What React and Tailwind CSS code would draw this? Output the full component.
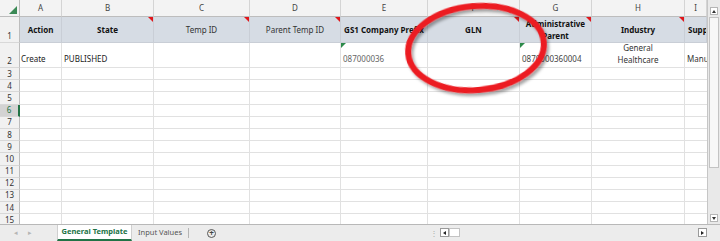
const cols = ["A", "B", "C", "D", "E", "F", "G", "H", "I"];
const widths = "20px 42px 92px 96px 91px 87px 92px 72px 93px 22px";

function RedTick({ side = "right", color = "red" }) {
  const cls =
    side === "right"
      ? "absolute top-0 right-0 w-0 h-0 border-l-[5px] border-l-transparent border-t-[5px]"
      : "absolute top-0 left-0 w-0 h-0 border-r-[5px] border-r-transparent border-t-[5px]";
  return <span className={cls + (color === "red" ? " border-t-[#e0161b]" : " border-t-[#2c8a4a]")} />;
}

function RowHead({ n, h, selected, bottom }) {
  return (
    <div
      className={
        "flex justify-center border-b border-b-[#d8d8d8] text-[8px] leading-[10px] " +
        (bottom ? "items-end pb-[1px] " : "items-center ") +
        (selected
          ? "bg-[#d3d3d3] text-[#217346] border-r-2 border-r-[#217346]"
          : "bg-[#f1f1f1] text-[#333] border-r border-r-[#bdbdbd]")
      }
      style={{ height: h }}
    >
      {n}
    </div>
  );
}

export default function App() {
  const headerRow = [
    { t: "Action", b: true },
    { t: "State", b: true, tick: true },
    { t: "Temp ID", tick: true },
    { t: "Parent Temp ID", tick: true },
    { t: "GS1 Company Prefix", b: true },
    { t: "GLN", b: true, tick: true },
    { t: "Administrative Parent", b: true, tick: true, two: true },
    { t: "Industry", b: true, tick: true },
    { t: "Supplier", b: true, clip: true },
  ];
  const emptyRows = [3, 4, 5, 6, 7, 8, 9, 10, 11, 12, 13, 14, 15];

  return (
    <div
      className="relative w-[720px] h-[241px] overflow-hidden bg-white text-[#222]"
      style={{ fontFamily: '"Noto Sans", "Open Sans", sans-serif' }}
    >
      <div className="flex h-[224px]">
        <div className="w-[707px] overflow-hidden">
          <div className="grid" style={{ gridTemplateColumns: widths }}>
            {/* column letters */}
            <div className="relative h-[17px] bg-[#f3f3f3] border-r border-b border-[#bdbdbd]">
              <span className="absolute right-[2px] bottom-[2px] w-0 h-0 border-l-[8px] border-l-transparent border-b-[8px] border-b-[#3c8a56]" />
            </div>
            {cols.map((c) => (
              <div
                key={c}
                className="h-[17px] flex items-center justify-center bg-[#f3f3f3] border-r border-r-[#d4d4d4] border-b border-b-[#bdbdbd] text-[8px] text-[#444]"
              >
                {c}
              </div>
            ))}

            {/* row 1 */}
            <RowHead n={1} h={26} bottom />
            {headerRow.map((c, i) => (
              <div
                key={i}
                className={
                  "relative h-[26px] flex items-center bg-[#d6dce4] border-r border-b border-[#c9ced6] text-[8px] leading-[12px] overflow-hidden " +
                  (c.clip ? "pl-[3px] justify-start whitespace-nowrap " : "justify-center text-center whitespace-nowrap ") +
                  (c.b ? "font-bold text-[#111]" : "text-[#333]")
                }
              >
                {c.two ? (
                  <span>
                    Administrative
                    <br />
                    Parent
                  </span>
                ) : (
                  c.t
                )}
                {c.tick && <RedTick />}
              </div>
            ))}

            {/* row 2 */}
            <RowHead n={2} h={25} bottom />
            <div className="h-[25px] flex items-end px-[1px] pb-[2px] border-r border-b border-[#e1e1e1] text-[8px]">Create</div>
            <div className="h-[25px] flex items-end px-[2px] pb-[2px] border-r border-b border-[#e1e1e1] text-[8px]">PUBLISHED</div>
            <div className="h-[25px] border-r border-b border-[#e1e1e1]" />
            <div className="h-[25px] border-r border-b border-[#e1e1e1]" />
            <div className="relative h-[25px] flex items-end px-[2px] pb-[2px] border-r border-b border-[#e1e1e1] text-[8px] text-[#666]">
              087000036
              <RedTick side="left" color="green" />
            </div>
            <div className="h-[25px] border-r border-b border-[#e1e1e1]" />
            <div className="relative h-[25px] flex items-end px-[2px] pb-[2px] border-r border-b border-[#e1e1e1] text-[8px] text-[#444] whitespace-nowrap">
              0870000360004
              <RedTick side="left" color="green" />
            </div>
            <div className="h-[25px] flex items-end justify-center pb-[1px] border-r border-b border-[#e1e1e1] text-[8px] leading-[12px] text-center text-[#333]">
              <span>
                General
                <br />
                Healthcare
              </span>
            </div>
            <div className="h-[25px] flex items-end px-[2px] pb-[2px] border-b border-[#e1e1e1] text-[8px] text-[#333] overflow-hidden whitespace-nowrap">
              Manufacturer
            </div>

            {/* empty rows */}
            {emptyRows.map((n) => (
              <Row key={n} n={n} />
            ))}
          </div>
        </div>

        {/* vertical scrollbar */}
        <div className="relative w-[13px] h-full bg-[#e9e9e9] border-l border-l-[#c6c6c6]">
          <div className="absolute left-[2px] top-[7px] w-[8px] h-[8px] bg-white border border-[#b5b5b5] flex items-center justify-center">
            <span className="w-0 h-0 border-l-[2px] border-r-[2px] border-l-transparent border-r-transparent border-b-[3px] border-b-[#333]" />
          </div>
          <div className="absolute left-[1px] top-[17px] w-[10px] h-[151px] bg-[#f7f7f7] border border-[#c3c3c3]" />
          <div className="absolute left-[2px] bottom-[2px] w-[8px] h-[8px] bg-white border border-[#b5b5b5] flex items-center justify-center">
            <span className="w-0 h-0 border-l-[2px] border-r-[2px] border-l-transparent border-r-transparent border-t-[3px] border-t-[#333]" />
          </div>
        </div>
      </div>

      {/* sheet tabs */}
      <div className="flex items-stretch h-[17px] bg-[#ececec] border-t border-t-[#b8b8b8] text-[7.5px] whitespace-nowrap">
        <div className="w-[57px] flex items-center gap-[10px] pl-[14px] text-[#b5b5b5] text-[7px]">
          <span>◂</span>
          <span>▸</span>
        </div>
        <div className="w-[75px] flex items-center justify-center bg-white border-x border-x-[#cfcfcf] border-b-2 border-b-[#217346] font-bold text-[#217346]">
          General Template
        </div>
        <div className="w-[57px] flex items-center justify-center text-[#555] border-r border-r-[#b5b5b5] my-[3px]">
          Input Values
        </div>
        <div className="w-[45px] flex items-center justify-center">
          <span className="w-[9px] h-[9px] rounded-full border border-[#555] flex items-center justify-center text-[8px] leading-none text-[#444] font-bold">
            +
          </span>
        </div>
        <div className="flex-1 flex items-center relative">
          <span className="absolute left-[196px] text-[#aaa] text-[8px]">⋮</span>
          <div className="absolute left-[206px] top-[3px] w-[9px] h-[9px] bg-white border border-[#9a9a9a] flex items-center justify-center">
            <span className="w-0 h-0 border-t-[2px] border-b-[2px] border-t-transparent border-b-transparent border-r-[3px] border-r-[#222]" />
          </div>
          <div className="absolute left-[215px] top-[3px] w-[11px] h-[9px] bg-white border border-[#c3c3c3]" />
          <div className="absolute right-[13px] top-[3px] w-[9px] h-[9px] bg-white border border-[#9a9a9a] flex items-center justify-center">
            <span className="w-0 h-0 border-t-[2px] border-b-[2px] border-t-transparent border-b-transparent border-l-[3px] border-l-[#222]" />
          </div>
        </div>
      </div>

      {/* red annotation ellipse */}
      <svg className="absolute inset-0 pointer-events-none" width="720" height="241">
        <defs>
          <filter id="sh" x="-20%" y="-20%" width="140%" height="140%">
            <feDropShadow dx="2" dy="3" stdDeviation="1.5" floodColor="#000" floodOpacity="0.35" />
          </filter>
        </defs>
        <ellipse
          cx="476"
          cy="48"
          rx="68"
          ry="42"
          transform="rotate(-5 476 48)"
          fill="none"
          stroke="#ec1c24"
          strokeWidth="6"
          filter="url(#sh)"
        />
      </svg>
    </div>
  );
}

function Row({ n }) {
  const h = 12.2;
  return (
    <>
      <RowHead n={n} h={h} selected={n === 6} />
      {cols.map((c, i) => (
        <div
          key={c}
          className={"border-b border-[#e1e1e1] " + (i < cols.length - 1 ? "border-r" : "")}
          style={{ height: h }}
        />
      ))}
    </>
  );
}
